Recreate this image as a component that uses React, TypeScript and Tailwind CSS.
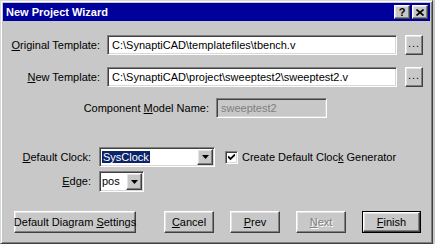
import React from 'react'

const sunken =
  'border border-t-[#808080] border-l-[#808080] border-r-white border-b-white shadow-[inset_1px_1px_#404040,inset_-1px_-1px_#d8d8d8]'
const raised =
  'border border-t-white border-l-white border-r-[#404040] border-b-[#404040] shadow-[inset_-1px_-1px_#808080,inset_1px_1px_#e4e4e4] bg-[#c8c8c8]'

const Acc = ({ children }: { children: React.ReactNode }) => <span className="underline underline-offset-[1px]">{children}</span>

function Arrow() {
  return (
    <div className={`${raised} w-[16px] h-full flex items-center justify-center`}>
      <svg width="7" height="4" viewBox="0 0 7 4">
        <path d="M0 0h7L3.5 4z" fill="#000" />
      </svg>
    </div>
  )
}

function Button({ children, w, disabled, def }: { children: React.ReactNode; w: string; disabled?: boolean; def?: boolean }) {
  const inner = (
    <div className={`${raised} h-full w-full flex items-center justify-center ${disabled ? 'text-[#808080] [text-shadow:1px_1px_#fff]' : 'text-black'}`}>
      <span className="whitespace-pre">{children}</span>
    </div>
  )
  if (def) {
    return <div className={`${w} h-[22px] border border-black`}>{inner}</div>
  }
  return <div className={`${w} h-[22px]`}>{inner}</div>
}

export default function App() {
  return (
    <div className="w-[435px] h-[244px] bg-[#c8c8c8] font-['Liberation_Sans',Arial,sans-serif] text-[11px] text-black leading-none overflow-hidden">
      <div className="w-[433px] h-[244px] border border-t-[#d8d8d8] border-l-[#d8d8d8] border-r-[#404040] border-b-[#404040] shadow-[inset_1px_1px_#fff,inset_-1px_-1px_#808080] p-[2px] flex flex-col">
        {/* title */}
        <div className="h-[18px] bg-[#00009c] flex items-center justify-between pl-[2px] pr-[2px] flex-shrink-0">
          <span className="text-white font-bold text-[11px] pl-[1px]">New Project Wizard</span>
          <div className="flex gap-[1px]">
            <div className={`${raised} w-[16px] h-[14px] flex items-center justify-center font-bold text-[11px]`}>?</div>
            <div className={`${raised} w-[16px] h-[14px] flex items-center justify-center ml-[1px]`}>
              <svg width="8" height="7" viewBox="0 0 8 7">
                <path d="M0.5 0.5L7.5 6.5M7.5 0.5L0.5 6.5" stroke="#000" strokeWidth="1.6" />
              </svg>
            </div>
          </div>
        </div>

        {/* body */}
        <div className="flex flex-col">
          <div className="flex items-center mt-[14px]">
            <div className="w-[97px] text-right">
              <Acc>O</Acc>riginal Template:
            </div>
            <div className={`${sunken} bg-white ml-[7px] w-[290px] h-[20px] flex items-center pl-[4px]`}>C:\SynaptiCAD\templatefiles\tbench.v</div>
            <div className={`${raised} ml-[8px] w-[18px] h-[20px] flex items-end justify-center pb-[5px] tracking-[1px]`}>...</div>
          </div>

          <div className="flex items-center mt-[12px]">
            <div className="w-[97px] text-right">
              <Acc>N</Acc>ew Template:
            </div>
            <div className={`${sunken} bg-white ml-[7px] w-[290px] h-[20px] flex items-center pl-[4px]`}>C:\SynaptiCAD\project\sweeptest2\sweeptest2.v</div>
            <div className={`${raised} ml-[8px] w-[18px] h-[20px] flex items-end justify-center pb-[5px] tracking-[1px]`}>...</div>
          </div>

          <div className="flex items-center mt-[11px]">
            <div className="w-[206px] text-right">
              Component <Acc>M</Acc>odel Name:
            </div>
            <div className={`${sunken} ml-[7px] w-[111px] h-[20px] flex items-center pl-[4px] text-[#808080]`}>sweeptest2</div>
          </div>

          <div className="flex items-center mt-[29px]">
            <div className="w-[88px] text-right">
              <Acc>D</Acc>efault Clock:
            </div>
            <div className={`${sunken} bg-white ml-[8px] w-[116px] h-[20px] flex items-center pl-[2px] pr-[1px] py-[1px]`}>
              <span className="bg-[#0a246a] text-white h-[12px] flex items-center px-[1px] mr-auto">SysClock</span>
              <Arrow />
            </div>
            <div className={`${sunken} bg-white ml-[10px] w-[13px] h-[13px] flex items-center justify-center`}>
              <svg width="7" height="7" viewBox="0 0 7 7">
                <path d="M0 2.5L2.5 5L7 0.5" stroke="#000" strokeWidth="1.8" fill="none" />
              </svg>
            </div>
            <span className="ml-[4px]">
              Create Default Cloc<Acc>k</Acc> Generator
            </span>
          </div>

          <div className="flex items-center mt-[4px]">
            <div className="w-[88px] text-right">
              <Acc>E</Acc>dge:
            </div>
            <div className={`${sunken} bg-white ml-[8px] w-[45px] h-[21px] flex items-center pl-[2px] pr-[1px] py-[1px]`}>
              <span className="mr-auto">pos</span>
              <Arrow />
            </div>
          </div>

          <div className="flex items-center mt-[19px] pl-[11px]">
            <Button w="w-[122px]">
              Default Diagram <Acc>S</Acc>ettings
            </Button>
            <div className="ml-[28px]">
              <Button w="w-[50px]">
                <Acc>C</Acc>ancel
              </Button>
            </div>
            <div className="ml-[16px]">
              <Button w="w-[50px]">
                <Acc>P</Acc>rev
              </Button>
            </div>
            <div className="ml-[16px]">
              <Button w="w-[50px]" disabled>
                <Acc>N</Acc>ext
              </Button>
            </div>
            <div className="ml-[16px]">
              <Button w="w-[59px]" def>
                <Acc>F</Acc>inish
              </Button>
            </div>
          </div>
        </div>
      </div>
    </div>
  )
}
